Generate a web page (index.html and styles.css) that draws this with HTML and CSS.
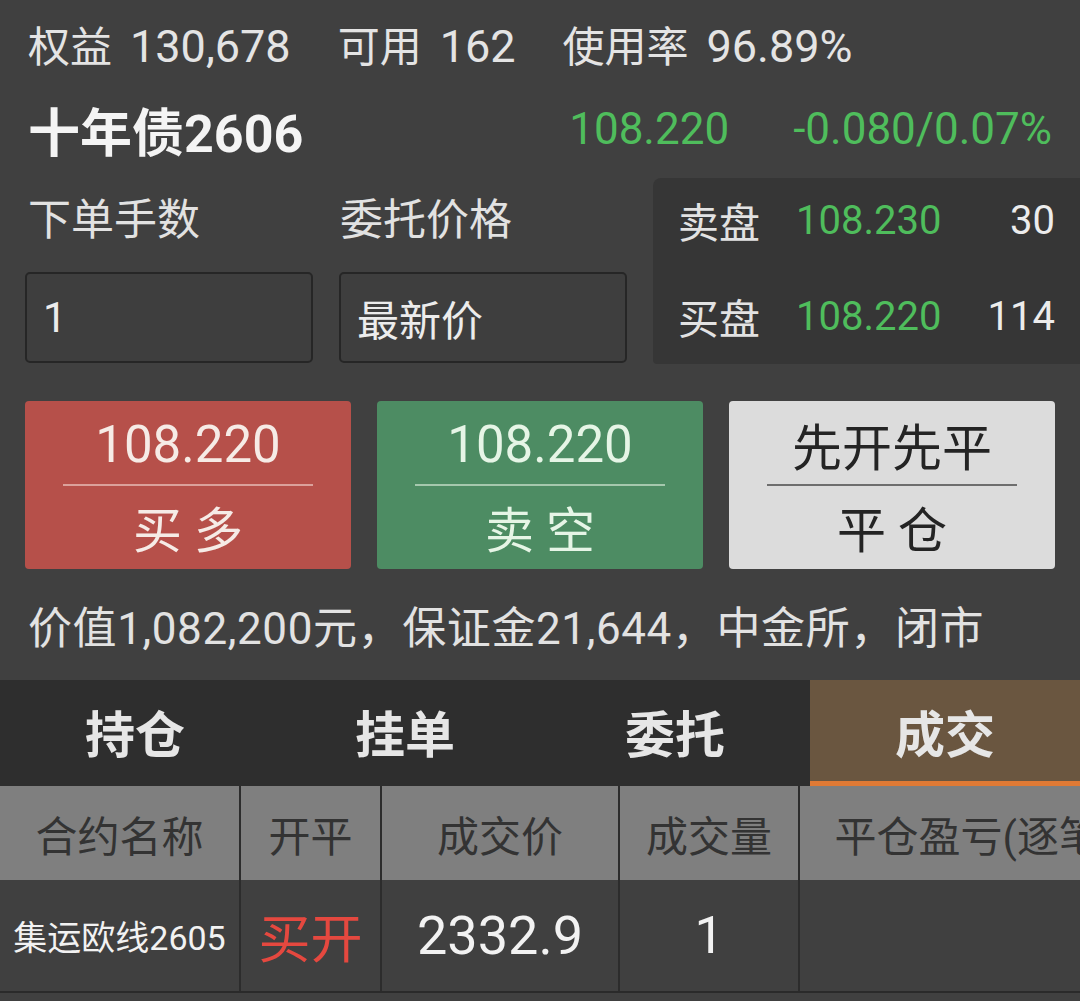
FILE: index.html
```html
<!DOCTYPE html>
<html lang="zh-CN">
<head>
<meta charset="utf-8">
<title>下单</title>
<link rel="stylesheet" href="styles.css">
</head>
<body>
<div class="app">
  <div class="summary">
    <span class="stat">权益<span class="num">130,678</span></span>
    <span class="stat">可用<span class="num">162</span></span>
    <span class="stat">使用率<span class="num">96.89%</span></span>
  </div>

  <div class="title-row">
    <span class="name">十年债2606</span>
    <span class="last up">108.220</span>
    <span class="chg up">-0.080/0.07%</span>
  </div>

  <div class="order-area">
    <div class="order-form">
      <div class="labels">
        <span class="label">下单手数</span>
        <span class="label">委托价格</span>
      </div>
      <div class="inputs">
        <div class="field">1</div>
        <div class="field">最新价</div>
      </div>
    </div>
    <div class="book">
      <div class="book-row">
        <span class="side">卖盘</span>
        <span class="bprice up">108.230</span>
        <span class="qty">30</span>
      </div>
      <div class="book-row">
        <span class="side">买盘</span>
        <span class="bprice up">108.220</span>
        <span class="qty">114</span>
      </div>
    </div>
  </div>

  <div class="actions">
    <div class="btn btn-buy">
      <div class="btn-top">108.220</div>
      <div class="btn-line"></div>
      <div class="btn-bottom">买 多</div>
    </div>
    <div class="btn btn-sell">
      <div class="btn-top">108.220</div>
      <div class="btn-line"></div>
      <div class="btn-bottom">卖 空</div>
    </div>
    <div class="btn btn-close">
      <div class="btn-top cjk">先开先平</div>
      <div class="btn-line"></div>
      <div class="btn-bottom">平 仓</div>
    </div>
  </div>

  <div class="info">价值1,082,200元，保证金21,644，中金所，闭市</div>

  <div class="tabs">
    <div class="tab">持仓</div>
    <div class="tab">挂单</div>
    <div class="tab">委托</div>
    <div class="tab active">成交</div>
  </div>

  <div class="grid-wrap">
    <div class="grid">
      <div class="th">合约名称</div>
      <div class="th">开平</div>
      <div class="th">成交价</div>
      <div class="th">成交量</div>
      <div class="th th-last">平仓盈亏(逐笔)</div>

      <div class="td td-name">集运欧线2605</div>
      <div class="td td-open">买开</div>
      <div class="td td-price">2332.9</div>
      <div class="td td-vol">1</div>
      <div class="td"></div>
    </div>
  </div>
</div>
</body>
</html>
```

FILE: styles.css
```css
* { box-sizing: border-box; }

html, body {
  margin: 0;
  padding: 0;
  background: #404040;
}

body {
  font-family: "Roboto", "Noto Sans CJK SC", sans-serif;
  color: #e6e6e6;
  width: 1080px;
  height: 1001px;
  overflow: hidden;
}

.app {
  display: flex;
  flex-direction: column;
  background: #404040;
  min-height: 1001px;
}

.up { color: #4fbd5c; }

/* summary */
.summary {
  height: 86px;
  display: flex;
  align-items: center;
  gap: 47px;
  padding: 0 28px;
  font-size: 42px;
  color: #e4e4e4;
}
.num {
  font-size: 45px;
  margin-left: 18px;
}

/* title */
.title-row {
  height: 92px;
  display: flex;
  align-items: center;
  padding: 0 28px 6px;
}
.name {
  font-size: 52px;
  font-weight: 700;
  color: #f4f4f4;
}
.last {
  margin-left: auto;
  font-size: 44px;
}
.chg {
  margin-left: 64px;
  font-size: 44px;
}

/* order area */
.order-area {
  height: 186px;
  display: flex;
}
.order-form {
  width: 653px;
  padding-left: 25px;
  display: flex;
  flex-direction: column;
}
.labels {
  height: 94px;
  display: flex;
  align-items: center;
  padding-bottom: 18px;
  padding-left: 3px;
  font-size: 43px;
  color: #e2e2e2;
}
.label { width: 312px; }
.inputs {
  display: flex;
  gap: 26px;
}
.field {
  width: 288px;
  height: 91px;
  border: 2px solid #262626;
  border-radius: 5px;
  background: #3e3e3e;
  display: flex;
  align-items: center;
  padding-left: 16px;
  font-size: 42px;
  color: #ececec;
}

.book {
  flex: 1;
  background: #363636;
  border-top-left-radius: 8px;
  border-bottom-left-radius: 4px;
  padding: 22px 25px 0;
  display: flex;
  flex-direction: column;
  gap: 56px;
}
.book-row {
  height: 40px;
  display: flex;
  align-items: center;
  font-size: 41px;
}
.side {
  width: 118px;
  color: #e2e2e2;
}
.bprice {
  font-size: 40px;
}
.qty {
  margin-left: auto;
  font-size: 40px;
  color: #ececec;
}

/* action buttons */
.actions {
  margin-top: 37px;
  height: 168px;
  display: flex;
  gap: 26px;
  padding: 0 25px;
}
.btn {
  flex: 1;
  border-radius: 4px;
  display: flex;
  flex-direction: column;
  align-items: center;
  padding: 0 38px;
}
.btn-top, .btn-bottom {
  height: 84px;
  display: flex;
  align-items: center;
  justify-content: center;
  white-space: nowrap;
}
.btn-top {
  font-size: 51px;
  padding-top: 2px;
}
.btn-top.cjk { font-size: 50px; }
.btn-bottom {
  font-size: 49px;
  padding-bottom: 2px;
}
.btn-line {
  align-self: stretch;
  height: 2px;
  margin-top: -1px;
  margin-bottom: -1px;
}
.btn-buy { background: #b6504a; color: #f6ebe6; }
.btn-buy .btn-line { background: #dba19b; }
.btn-sell { background: #4d8c63; color: #e6f5e6; }
.btn-sell .btn-line { background: #a5c8ad; }
.btn-close { background: #dcdcdc; color: #242424; }
.btn-close .btn-line { background: #6e6e6e; }

/* info */
.info {
  height: 111px;
  display: flex;
  align-items: center;
  padding-left: 28px;
  font-size: 44px;
  letter-spacing: 0.6px;
  color: #e2e2e2;
  white-space: nowrap;
}

/* tabs */
.tabs {
  height: 106px;
  display: grid;
  grid-template-columns: repeat(4, 270px);
  background: #2e2e2e;
}
.tab {
  display: flex;
  align-items: center;
  justify-content: center;
  font-size: 50px;
  font-weight: 700;
  color: #e6e6e6;
  border-bottom: 5px solid transparent;
}
.tab.active {
  background: #6a5640;
  border-bottom-color: #e07a35;
}

/* grid table */
.grid-wrap {
  overflow: hidden;
  width: 1080px;
  border-bottom: 2px solid #2a2a2a;
}
.grid {
  display: grid;
  grid-template-columns: 241px 141px 238px 180px 352px;
  width: 1152px;
}
.th {
  height: 94px;
  background: #7f7f7f;
  color: #333333;
  font-size: 42px;
  display: flex;
  align-items: center;
  justify-content: center;
  border-right: 2px solid #2c2c2c;
  white-space: nowrap;
}
.td {
  height: 111px;
  background: #404040;
  display: flex;
  align-items: center;
  justify-content: center;
  border-right: 2px solid #2c2c2c;
  color: #f2f2f2;
  white-space: nowrap;
}
.td-name { font-size: 34px; }
.td-open { font-size: 52px; color: #e5483f; }
.td-price { font-size: 54px; }
.td-vol { font-size: 52px; }
```
